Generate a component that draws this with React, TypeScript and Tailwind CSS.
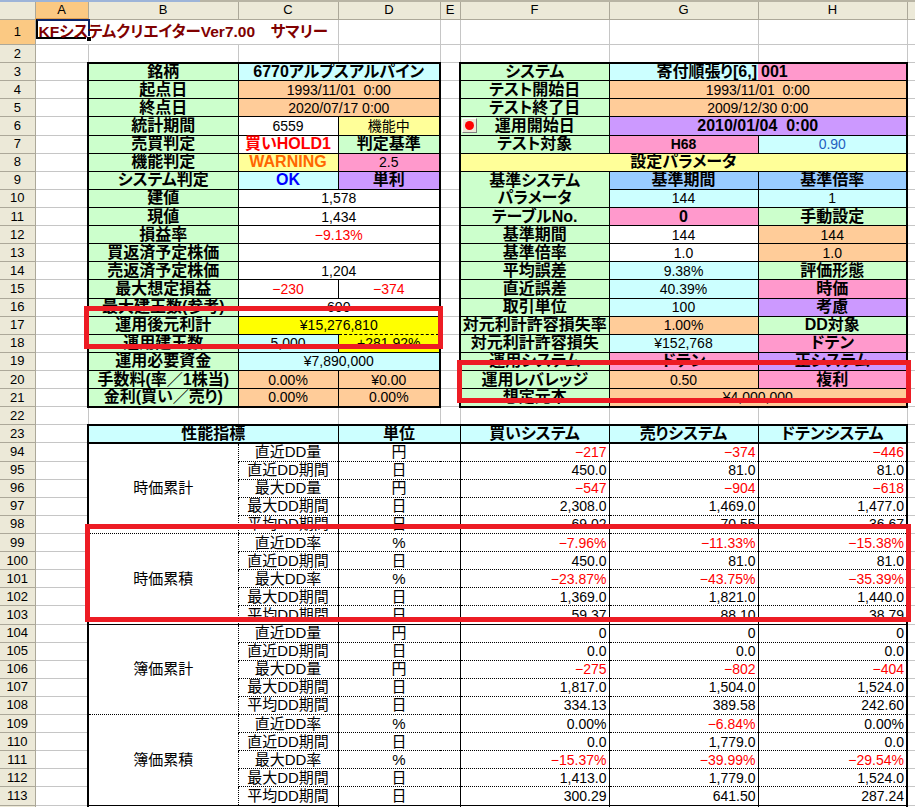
import React from 'react'

type Cell = {
  t?: React.ReactNode
  c?: string
  al?: string
  span?: number
  bt?: string
  bb?: string
  bl?: string
  br?: string
}

// cell fills (Excel 2003 palette)
const GREEN = 'bg-[#ccffcc]'
const CYAN = 'bg-[#ccffff]'
const PEACH = 'bg-[#ffcc99]'
const LYELLOW = 'bg-[#ffff99]'
const PINK = 'bg-[#ff99cc]'
const LAV = 'bg-[#cc99ff]'
const YELLOW = 'bg-[#ffff00]'
const SKY = 'bg-[#99ccff]'

const BOLD = 'font-bold text-[16px]'
const VAL = 'text-[14px]'
const RED = 'text-[#ff0000]'

// borders
const T1 = '[border-top:1px_solid_#000]'
const T2 = '[border-top:2px_solid_#000]'
const B1 = '[border-bottom:1px_solid_#000]'
const B2 = '[border-bottom:2px_solid_#000]'
const BD = '[border-bottom:1px_dotted_#000]'
const BDASH = '[border-bottom:1px_dashed_#000]'
const TDASH = '[border-top:1px_dashed_#000]'
const L1 = '[border-left:1px_solid_#000]'
const L2 = '[border-left:2px_solid_#000]'
const LD = '[border-left:1px_dotted_#000]'
const R1 = '[border-right:1px_solid_#000]'
const R2 = '[border-right:2px_solid_#000]'
const GRID = '[border:1px_solid_#c6c6c6]'
const HEAD = '[border-right:1px_solid_#aca899] [border-bottom:1px_solid_#aca899] text-center text-[13px] font-normal p-0 leading-[14px]'

const RowHead = ({ n, sel }: { n: React.ReactNode; sel?: boolean }) => (
   <td className={`${HEAD} ${sel ? 'bg-[#fbc983]' : 'bg-[#ece9d8]'}`}>{n}</td>
)

const Grid = ({ span }: { span?: number }) => <td colSpan={span} className={`${GRID} p-0`} />

const RedDot = () => (
   <span className="absolute left-[1px] top-[1px] w-[15px] h-[15px] bg-[#ece9d8] border border-[#ffffff] border-r-[#808080] border-b-[#808080] flex items-center justify-center">
      <span className="w-[9px] h-[9px] rounded-full bg-[#ff0000]" />
   </span>
)

const leftRows: Cell[][] = [
   [{ t: '銘柄' }, { t: '6770アルプスアルパイン', c: `${CYAN} ${BOLD}`, span: 2 }],
   [{ t: '起点日' }, { t: '1993/11/01  0:00', c: `${PEACH} ${VAL}`, span: 2 }],
   [{ t: '終点日' }, { t: '2020/07/17 0:00', c: `${PEACH} ${VAL}`, span: 2 }],
   [{ t: '統計期間' }, { t: '6559', c: VAL }, { t: '機能中', c: `${LYELLOW} ${VAL}` }],
   [{ t: '売買判定' }, { t: '買いHOLD1', c: `${BOLD} ${RED}` }, { t: '判定基準', c: `${GREEN} ${BOLD}` }],
   [{ t: '機能判定' }, { t: 'WARNING', c: `${LYELLOW} ${BOLD} text-[#ff6600]` }, { t: '2.5', c: `${PINK} ${VAL}` }],
   [{ t: 'システム判定' }, { t: 'OK', c: `${CYAN} ${BOLD} text-[#0000ff]` }, { t: '単利', c: `${LAV} ${BOLD}` }],
   [{ t: '建値' }, { t: '1,578', c: VAL, span: 2 }],
   [{ t: '現値' }, { t: '1,434', c: VAL, span: 2 }],
   [{ t: '損益率' }, { t: '−9.13%', c: `${VAL} ${RED}`, span: 2 }],
   [{ t: '買返済予定株価' }, { t: '', c: VAL, span: 2 }],
   [{ t: '売返済予定株価' }, { t: '1,204', c: VAL, span: 2 }],
   [{ t: '最大想定損益' }, { t: '−230', c: `${VAL} ${RED}` }, { t: '−374', c: `${VAL} ${RED}` }],
   [{ t: '最大建玉数(参考)' }, { t: '600', c: VAL, span: 2 }],
   [{ t: '運用後元利計' }, { t: '¥15,276,810', c: `${YELLOW} ${VAL}`, span: 2, bb: BDASH }],
   [{ t: '運用建玉数' }, { t: '5,000', c: `${CYAN} ${VAL}` }, { t: '+281.92%', c: `${YELLOW} ${VAL}`, bt: TDASH }],
   [{ t: '運用必要資金' }, { t: '¥7,890,000', c: `${CYAN} ${VAL}`, span: 2 }],
   [{ t: '手数料(率／1株当)' }, { t: '0.00%', c: `${PEACH} ${VAL}` }, { t: '¥0.00', c: `${PEACH} ${VAL}` }],
   [{ t: '金利(買い／売り)' }, { t: '0.00%', c: `${PEACH} ${VAL}` }, { t: '0.00%', c: `${PEACH} ${VAL}` }]
]

const rightRows: Cell[][] = [
   [{ t: 'システム' }, { t: '寄付順張り[6,]', c: `${CYAN} ${BOLD}`, al: 'text-right pr-[1px]', br: '' }, { t: '001', c: `${PINK} ${BOLD}`, al: 'text-left pl-[3px]', bl: '' }],
   [{ t: 'テスト開始日' }, { t: '1993/11/01  0:00', c: `${PEACH} ${VAL}`, span: 2 }],
   [{ t: 'テスト終了日' }, { t: '2009/12/30 0:00', c: `${PEACH} ${VAL}`, span: 2 }],
   [
      {
         t: (
            <>
               <RedDot />
               運用開始日
            </>
         ),
         c: `${GREEN} ${BOLD} relative`
      },
      { t: '2010/01/04  0:00', c: `${LAV} ${BOLD}`, span: 2 }
   ],
   [{ t: 'テスト対象' }, { t: 'H68', c: `${PINK} font-bold text-[14px]` }, { t: '0.90', c: `${CYAN} ${VAL} text-[#1f5fbf]` }],
   [{ t: '設定パラメータ', c: `${LYELLOW} ${BOLD}`, span: 3 }],
   [{ t: '基準システム', bb: '' }, { t: '基準期間', c: `${SKY} ${BOLD}` }, { t: '基準倍率', c: `${SKY} ${BOLD}` }],
   [{ t: 'パラメータ', bt: '' }, { t: '144', c: `${CYAN} ${VAL}` }, { t: '1', c: `${CYAN} ${VAL}` }],
   [{ t: 'テーブルNo.' }, { t: '0', c: `${PINK} ${BOLD}` }, { t: '手動設定', c: `${GREEN} ${BOLD}` }],
   [{ t: '基準期間' }, { t: '144', c: VAL }, { t: '144', c: `${PEACH} ${VAL}` }],
   [{ t: '基準倍率' }, { t: '1.0', c: VAL }, { t: '1.0', c: `${PEACH} ${VAL}` }],
   [{ t: '平均誤差' }, { t: '9.38%', c: `${CYAN} ${VAL}` }, { t: '評価形態', c: `${GREEN} ${BOLD}` }],
   [{ t: '直近誤差' }, { t: '40.39%', c: `${CYAN} ${VAL}` }, { t: '時価', c: `${PINK} ${BOLD}` }],
   [{ t: '取引単位' }, { t: '100', c: `${CYAN} ${VAL}` }, { t: '考慮', c: `${LAV} ${BOLD}` }],
   [{ t: '対元利計許容損失率' }, { t: '1.00%', c: `${PEACH} ${VAL}` }, { t: 'DD対象', c: `${GREEN} ${BOLD}` }],
   [{ t: '対元利計許容損失' }, { t: '¥152,768', c: `${CYAN} ${VAL}` }, { t: 'ドテン', c: `${PINK} ${BOLD}` }],
   [{ t: '運用システム' }, { t: 'ドテン', c: `${PINK} ${BOLD}` }, { t: '正システム', c: `${LAV} ${BOLD}` }],
   [{ t: '運用レバレッジ' }, { t: '0.50', c: `${PEACH} ${VAL}` }, { t: '複利', c: `${PINK} ${BOLD}` }],
   [{ t: '想定元本' }, { t: '¥4,000,000', c: `${PEACH} ${VAL}`, span: 2 }]
]

const renderBlock = (cells: Cell[], k: number, last: number) =>
   cells.map((cell, i) => {
      const top = cell.bt ?? (k === 0 ? T2 : T1)
      const bottom = cell.bb ?? (k === last ? B2 : B1)
      const left = cell.bl ?? (i === 0 ? L2 : L1)
      const right = cell.br ?? (i === cells.length - 1 ? R2 : R1)
      const look = cell.c ?? `${GREEN} ${BOLD}`
      const align = cell.al ?? 'text-center'
      return (
         <td key={i} colSpan={cell.span} className={`${top} ${bottom} ${left} ${right} ${look} ${align} whitespace-pre p-0 leading-[16px]`}>
            {cell.t}
         </td>
      )
   })

type Line = [string, string, string, string, string]

const groups: { name: string; lines: Line[] }[] = [
   {
      name: '時価累計',
      lines: [
         ['直近DD量', '円', '−217', '−374', '−446'],
         ['直近DD期間', '日', '450.0', '81.0', '81.0'],
         ['最大DD量', '円', '−547', '−904', '−618'],
         ['最大DD期間', '日', '2,308.0', '1,469.0', '1,477.0'],
         ['平均DD期間', '日', '69.02', '70.55', '36.67']
      ]
   },
   {
      name: '時価累積',
      lines: [
         ['直近DD率', '%', '−7.96%', '−11.33%', '−15.38%'],
         ['直近DD期間', '日', '450.0', '81.0', '81.0'],
         ['最大DD率', '%', '−23.87%', '−43.75%', '−35.39%'],
         ['最大DD期間', '日', '1,369.0', '1,821.0', '1,440.0'],
         ['平均DD期間', '日', '59.37', '88.10', '38.79']
      ]
   },
   {
      name: '簿価累計',
      lines: [
         ['直近DD量', '円', '0', '0', '0'],
         ['直近DD期間', '日', '0.0', '0.0', '0.0'],
         ['最大DD量', '円', '−275', '−802', '−404'],
         ['最大DD期間', '日', '1,817.0', '1,504.0', '1,524.0'],
         ['平均DD期間', '日', '334.13', '389.58', '242.60']
      ]
   },
   {
      name: '簿価累積',
      lines: [
         ['直近DD率', '%', '0.00%', '−6.84%', '0.00%'],
         ['直近DD期間', '日', '0.0', '1,779.0', '0.0'],
         ['最大DD率', '%', '−15.37%', '−39.99%', '−29.54%'],
         ['最大DD期間', '日', '1,413.0', '1,779.0', '1,524.0'],
         ['平均DD期間', '日', '300.29', '641.50', '287.24']
      ]
   }
]

const NUM = 'text-[14px] text-right pr-[2px] p-0 leading-[16px] whitespace-nowrap'
const LBL = 'text-[15px] text-center p-0 leading-[16px] whitespace-nowrap'

const App: React.FC = () => {
   const rowCls = 'h-[18.12px]'

   return (
      <div className="relative w-[915px] h-[807px] overflow-hidden bg-white text-black font-['Liberation_Sans','Noto_Sans_CJK_JP',sans-serif] [font-feature-settings:'palt']">
         <div className="flex h-[2px]">
            <div className="w-[200px] bg-[#9db4d8]" />
            <div className="flex-1 bg-[#b8b4a4]" />
         </div>
         <table className="w-[967px] table-fixed border-collapse">
            <colgroup>
               <col className="w-[35px]" />
               <col className="w-[53px]" />
               <col className="w-[150px]" />
               <col className="w-[100px]" />
               <col className="w-[102px]" />
               <col className="w-[20px]" />
               <col className="w-[149px]" />
               <col className="w-[149px]" />
               <col className="w-[149px]" />
               <col className="w-[60px]" />
            </colgroup>
            <tbody>
               <tr className="h-[17px]">
                  <td className={`${HEAD} bg-[#ece9d8]`} />
                  <td className={`${HEAD} bg-[#fbc983] [border-bottom:2px_solid_#e0a050]`}>A</td>
                  {['B', 'C', 'D', 'E', 'F', 'G', 'H', ''].map((h) => (
                     <td key={h} className={`${HEAD} bg-[#ece9d8]`}>
                        {h}
                     </td>
                  ))}
               </tr>

               {/* row 1: title + active cell */}
               <tr className={rowCls}>
                  <RowHead n={1} sel />
                  <td colSpan={3} className="[border-right:1px_solid_#c6c6c6] [border-bottom:1px_solid_#c6c6c6] p-0 relative">
                     <span className="absolute left-0 top-[-1px] w-[54px] h-[20px] border-2 border-black border-t-[#0a246a] border-r-[#0a246a]" />
                     <span className="absolute left-[50px] top-[16px] w-[6px] h-[6px] bg-black border border-white" />
                     <span className="relative pl-[3px] text-[15.5px] font-bold leading-[16px] text-[#800000] whitespace-pre">KFシステムクリエイターVer7.00　サマリー</span>
                  </td>
                  <Grid />
                  <Grid />
                  <Grid />
                  <Grid />
                  <Grid />
                  <Grid />
               </tr>

               <tr className={rowCls}>
                  <RowHead n={2} />
                  {Array.from({ length: 9 }).map((_, i) => (
                     <Grid key={i} />
                  ))}
               </tr>

               {leftRows.map((cells, k) => (
                  <tr key={k} className={rowCls}>
                     <RowHead n={k + 3} />
                     <Grid />
                     {renderBlock(cells, k, leftRows.length - 1)}
                     <Grid />
                     {renderBlock(rightRows[k], k, rightRows.length - 1)}
                     <Grid />
                  </tr>
               ))}

               <tr className={rowCls}>
                  <RowHead n={22} />
                  {Array.from({ length: 9 }).map((_, i) => (
                     <Grid key={i} />
                  ))}
               </tr>

               {/* performance table header */}
               <tr className={rowCls}>
                  <RowHead n={23} />
                  <Grid />
                  <td colSpan={2} className={`${T2} ${B2} ${L2} ${R1} ${CYAN} ${BOLD} text-center p-0 leading-[16px]`}>
                     性能指標
                  </td>
                  <td colSpan={2} className={`${T2} ${B2} ${L1} ${R1} ${CYAN} ${BOLD} text-center p-0 leading-[16px]`}>
                     単位
                  </td>
                  <td className={`${T2} ${B2} ${L1} ${R1} ${CYAN} ${BOLD} text-center p-0 leading-[16px]`}>買いシステム</td>
                  <td className={`${T2} ${B2} ${L1} ${R1} ${CYAN} ${BOLD} text-center p-0 leading-[16px]`}>売りシステム</td>
                  <td className={`${T2} ${B2} ${L1} ${R2} ${CYAN} ${BOLD} text-center p-0 leading-[16px]`}>ドテンシステム</td>
                  <Grid />
               </tr>

               {groups.map((g, gi) =>
                  g.lines.map((line, i) => {
                     const solidSep = i === 4 && (gi === 1 || gi === 3)
                     const bottom = solidSep ? B1 : BD
                     return (
                        <tr key={`${gi}-${i}`} className={rowCls}>
                           <RowHead n={94 + gi * 5 + i} />
                           <Grid />
                           {i === 0 && (
                              <td rowSpan={5} className={`${L2} ${gi === 1 || gi === 3 ? B1 : BD} ${LBL}`}>
                                 {g.name}
                              </td>
                           )}
                           <td className={`${LD} ${bottom} ${LBL}`}>{line[0]}</td>
                           <td colSpan={2} className={`${L1} ${bottom} ${LBL}`}>
                              {line[1]}
                           </td>
                           {line.slice(2).map((v, j) => (
                              <td key={j} className={`${L1} ${bottom} ${j === 2 ? R2 : ''} ${NUM} ${v.startsWith('−') ? RED : ''}`}>
                                 {v}
                              </td>
                           ))}
                           <Grid />
                        </tr>
                     )
                  })
               )}

               <tr className={rowCls}>
                  <RowHead n={114} />
                  <Grid />
                  <td colSpan={2} className={`${L2} p-0`} />
                  <td colSpan={2} className={`${L1} p-0`} />
                  <td className={`${L1} p-0`} />
                  <td className={`${L1} p-0`} />
                  <td className={`${L1} ${R2} p-0`} />
                  <Grid />
               </tr>
            </tbody>
         </table>

         {/* red annotation frames */}
         <div className="absolute left-[84px] top-[306px] w-[359px] h-[43px] border-[5px] border-[#ed1c24]" />
         <div className="absolute left-[457px] top-[360px] w-[454px] h-[43px] border-[5px] border-[#ed1c24]" />
         <div className="absolute left-[85px] top-[524px] w-[826px] h-[98px] border-[5px] border-[#ed1c24]" />
      </div>
   )
}

export default App
